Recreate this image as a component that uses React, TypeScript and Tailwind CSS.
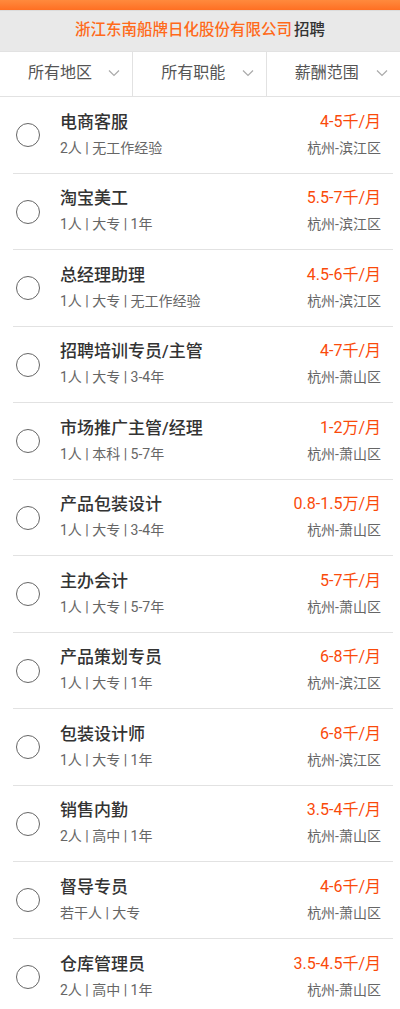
const JOBS = [
  { title: "电商客服", meta: "2人 | 无工作经验", salary: "4-5千/月", loc: "杭州-滨江区" },
  { title: "淘宝美工", meta: "1人 | 大专 | 1年", salary: "5.5-7千/月", loc: "杭州-滨江区" },
  { title: "总经理助理", meta: "1人 | 大专 | 无工作经验", salary: "4.5-6千/月", loc: "杭州-滨江区" },
  { title: "招聘培训专员/主管", meta: "1人 | 大专 | 3-4年", salary: "4-7千/月", loc: "杭州-萧山区" },
  { title: "市场推广主管/经理", meta: "1人 | 本科 | 5-7年", salary: "1-2万/月", loc: "杭州-萧山区" },
  { title: "产品包装设计", meta: "1人 | 大专 | 3-4年", salary: "0.8-1.5万/月", loc: "杭州-萧山区" },
  { title: "主办会计", meta: "1人 | 大专 | 5-7年", salary: "5-7千/月", loc: "杭州-萧山区" },
  { title: "产品策划专员", meta: "1人 | 大专 | 1年", salary: "6-8千/月", loc: "杭州-滨江区" },
  { title: "包装设计师", meta: "1人 | 大专 | 1年", salary: "6-8千/月", loc: "杭州-滨江区" },
  { title: "销售内勤", meta: "2人 | 高中 | 1年", salary: "3.5-4千/月", loc: "杭州-萧山区" },
  { title: "督导专员", meta: "若干人 | 大专", salary: "4-6千/月", loc: "杭州-萧山区" },
  { title: "仓库管理员", meta: "2人 | 高中 | 1年", salary: "3.5-4.5千/月", loc: "杭州-萧山区" },
];

const FILTERS = ["所有地区", "所有职能", "薪酬范围"];

function Chevron() {
  return (
    <svg width="12" height="8" viewBox="0 0 12 8" fill="none" className="shrink-0">
      <path d="M1 1.5l5 5 5-5" stroke="#aaa" strokeWidth="1.2" />
    </svg>
  );
}

function JobRow({ job, last }: { job: (typeof JOBS)[number]; last: boolean }) {
  return (
    <div className={`ml-[13px] mr-[7px] h-[76.5px] flex items-center ${last ? "" : "border-b border-[#e2e2e2]"}`}>
      <div className="w-[24px] h-[24px] rounded-full border-[1.5px] border-[#666] ml-[3px] mt-[1px] shrink-0" />
      <div className="flex-1 ml-[20px] flex flex-col gap-[5px] -mt-[1px]">
        <div className="text-[17px] leading-[22px] font-medium text-[#333]">{job.title}</div>
        <div className="text-[14px] leading-[20px] text-[#666]">{job.meta}</div>
      </div>
      <div className="flex flex-col items-end gap-[5px] mr-[12px] -mt-[1px]">
        <div className="text-[16px] leading-[22px] text-[#fa4a0a]">{job.salary}</div>
        <div className="text-[14px] leading-[20px] text-[#666]">{job.loc}</div>
      </div>
    </div>
  );
}

export default function App() {
  return (
    <div className="w-[400px] min-h-[1009px] bg-white" style={{ fontFamily: 'Roboto, "Noto Sans CJK SC", sans-serif' }}>
      <div className="h-[10px] bg-gradient-to-b from-[#ff8a3d] to-[#ff6f22]" />
      <div className="h-[41px] bg-[#e9e9e9] border-t border-[#dcdcdc] flex items-center justify-center text-[15.5px] font-medium">
        <span className="text-[#ff6a1a]">浙江东南船牌日化股份有限公司</span>
        <span className="text-[#333] ml-[2px]">招聘</span>
      </div>
      <div className="h-[46px] grid grid-cols-3 border-b border-[#dedede] border-t border-[#e2e2e2]">
        {FILTERS.map((f, i) => (
          <div key={f} className={`flex items-center justify-between pl-[28px] pr-[12px] pb-[3px] ${i < 2 ? "border-r border-[#e2e2e2]" : ""}`}>
            <span className="text-[16px] text-[#555]">{f}</span>
            <Chevron />
          </div>
        ))}
      </div>
      <div>
        {JOBS.map((job, i) => (
          <JobRow key={job.title} job={job} last={i === JOBS.length - 1} />
        ))}
      </div>
    </div>
  );
}
